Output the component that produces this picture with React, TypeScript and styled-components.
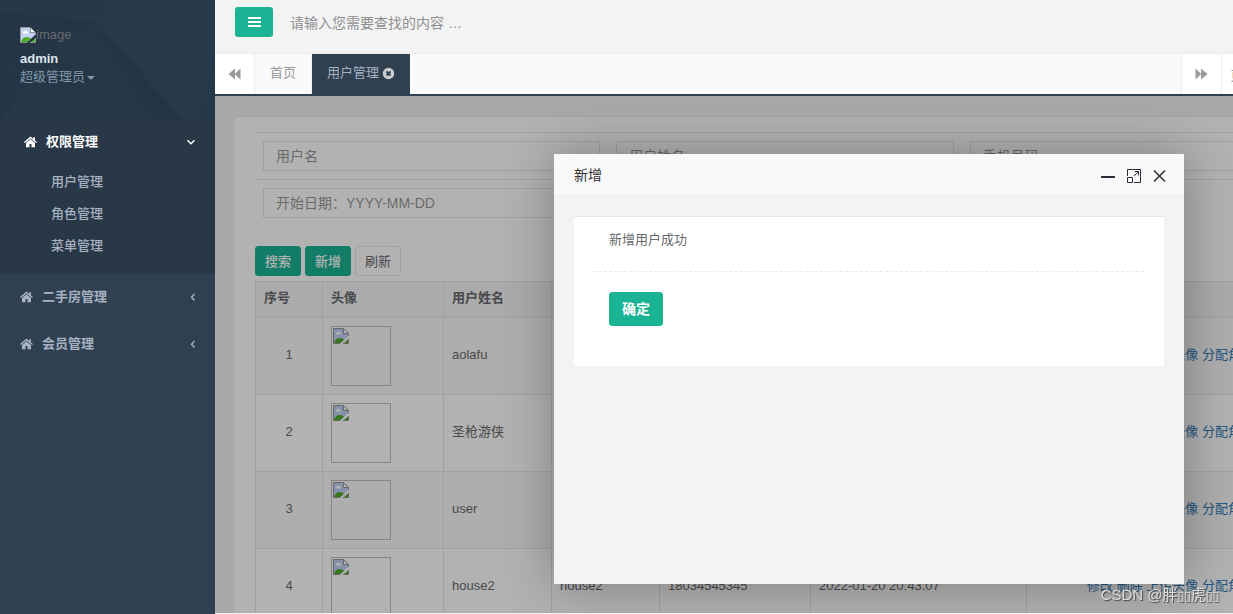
import React from 'react';
import styled, { createGlobalStyle } from 'styled-components';

const GlobalStyle = createGlobalStyle`
  *, *::before, *::after { box-sizing: border-box; }
  body {
    margin: 0;
    background: #2f4050;
    color: #676a6c;
    font: 13px/20px "Liberation Sans", "Noto Sans CJK SC", sans-serif;
  }
  button, input { font-family: inherit; }
  a { text-decoration: none; color: inherit; }
  ul { list-style: none; margin: 0; padding: 0; }
`;

const Shell = styled.div`
  display: flex;
  height: 100vh;
  overflow: hidden;
`;

const Sidebar = styled.nav`
  flex: 0 0 215px;
  background: #2f4050;
  color: #a7b1c2;
`;

const Profile = styled.div`
  position: relative;
  height: 120px;
  padding: 25px 20px;
  background: #263949;
`;

const Facets = styled.svg`
  position: absolute;
  inset: 0;
  width: 100%;
  height: 100%;
`;

const ProfileText = styled.div`
  position: relative;
  display: flex;
  flex-direction: column;
  line-height: 18px;
`;

const Avatar = styled.span`
  display: flex;
  align-items: center;
  height: 19px;
  color: #676a6c;
`;

const UserName = styled.strong`
  margin-top: 6px;
  color: #dfe4ed;
`;

const RoleLink = styled.a`
  display: flex;
  align-items: center;
  gap: 2px;
  color: #8095a8;
`;

const Caret = styled.span`
  margin-top: 2px;
  border: 4px solid transparent;
  border-top-color: currentColor;
  border-bottom: 0;
`;

const MenuSection = styled.li<{ $open?: boolean }>`
  background: ${p => (p.$open ? '#293846' : 'transparent')};
  color: ${p => (p.$open ? '#fff' : '#a7b1c2')};
  padding-left: ${p => (p.$open ? 4 : 0)}px;
  padding-bottom: ${p => (p.$open ? 12 : 0)}px;
`;

const MenuLink = styled.a`
  display: flex;
  align-items: center;
  height: 46px;
  padding: 0 17px 2px 20px;
  font-weight: 600;

  span { flex: 1; margin-left: 9px; }

  ${MenuSection} + ${MenuSection} & { height: 47px; }
`;

const OpenChevron = styled.i`
  display: flex;
  margin-right: 2px;
`;

const SubLink = styled.a`
  display: block;
  padding: 6px 0 6px 47px;
  color: #a7b1c2;
  font-weight: 500;
`;

const Main = styled.main`
  flex: 1 0 1140px;
  display: flex;
  flex-direction: column;
  background: #f3f3f4;
`;

const TopBar = styled.header`
  display: flex;
  align-items: flex-start;
  height: 54px;
  padding: 7px 20px;
  border-bottom: 1px solid #e7eaec;
`;

const MenuButton = styled.button`
  display: grid;
  place-items: center;
  width: 38px;
  height: 30px;
  padding: 0;
  border: 0;
  border-radius: 3px;
  background: #1ab394;
  color: #fff;
`;

const SearchInput = styled.input`
  width: 240px;
  height: 32px;
  margin-left: 16px;
  padding: 0 1px;
  border: 0;
  background: transparent;
  font-size: 14px;
  &::placeholder { color: #8f8f8f; }
`;

const TabBar = styled.div`
  display: flex;
  height: 42px;
  background: #fafafa;
  border-bottom: 2px solid #2f4050;
`;

const RollButton = styled.button<{ $width: number; $right?: boolean }>`
  display: flex;
  align-items: center;
  justify-content: center;
  width: ${p => p.$width}px;
  padding: 0;
  border: 0 solid #eee;
  border-width: ${p => (p.$right ? '0 0 0 1px' : '0 1px 0 0')};
  background: #fff;
  color: #999;
  font-size: 13px;
`;

const TabList = styled.div`
  display: flex;
  flex: 1;
`;

const Tab = styled.a<{ $active?: boolean }>`
  display: flex;
  align-items: center;
  gap: 3px;
  padding: 0 14px 2px 15px;
  border-right: 1px solid #eee;
  border-right-color: ${p => (p.$active ? '#2f4050' : '#eee')};
  background: ${p => (p.$active ? '#2f4050' : 'transparent')};
  color: ${p => (p.$active ? '#a7b1c2' : '#999')};

  &:first-child { padding-right: 15px; }
`;

const Frame = styled.section`
  position: relative;
  flex: 1;
  min-height: 0;
  overflow: hidden;
  padding: 20px;
  border-bottom: 1px solid #eee;
`;

const Card = styled.div`
  padding: 15px 20px 20px;
  border-top: 1px solid #e7eaec;
  background: #fff;
`;

const FilterRow = styled.div`
  display: grid;
  grid-template-columns: repeat(3, 1fr);
  border-top: 1px solid #e7eaec;
`;

const Field = styled.div`
  padding: 8px;
`;

const TextInput = styled.input`
  display: block;
  width: 100%;
  height: 30px;
  padding: 0 12px;
  border: 1px solid #e5e6e7;
  background: #fff;
  font-size: 14px;
  &::placeholder { color: #999; }
`;

const Actions = styled.div`
  display: flex;
  gap: 4px;
  margin: 20px 0 5px;
`;

const Button = styled.button<{ $primary?: boolean; $large?: boolean }>`
  height: ${p => (p.$large ? 34 : 30)}px;
  padding: 0 ${p => (p.$large ? 12 : 9)}px 2px;
  border: 1px solid ${p => (p.$primary ? '#1ab394' : '#e7eaec')};
  border-radius: 3px;
  background: ${p => (p.$primary ? '#1ab394' : '#fff')};
  color: ${p => (p.$primary ? '#fff' : '#676a6c')};
  font-size: ${p => (p.$large ? 14 : 13)}px;
  font-weight: ${p => (p.$large ? 600 : p.$primary ? 500 : 400)};
`;

const UserTable = styled.table`
  width: 100%;
  table-layout: fixed;
  border-collapse: collapse;
  th, td { border: 1px solid #e7e7e7; padding: 0 8px; text-align: left; }
  th { height: 36px; background: #f5f5f6; font-weight: 600; padding-bottom: 3px; }
  td { height: 77px; padding-bottom: 2px; }
  tbody tr:nth-child(odd) { background: #f9f9f9; }
  td:first-child, td:last-child { text-align: center; }
  td:nth-child(2) { padding-bottom: 0; }
`;

const Thumb = styled.div`
  width: 60px;
  height: 60px;
  padding: 1px;
  border: 1px solid #c0c0c0;
  svg { display: block; }
`;

const RowLink = styled.a`
  color: #337ab7;
`;

const Shade = styled.div`
  position: absolute;
  inset: 0;
  background: rgba(0, 0, 0, 0.3);
`;

const Dialog = styled.div`
  position: absolute;
  top: 58px;
  left: 339px;
  width: 630px;
  height: 430px;
  background: #f3f3f4;
  box-shadow: 1px 1px 50px rgba(0, 0, 0, 0.3);
`;

const DialogHeader = styled.header`
  display: flex;
  align-items: center;
  height: 42px;
  padding: 0 16px 0 20px;
  border-bottom: 1px solid #eee;
  background: #f8f8f8;
  color: #333;
`;

const DialogTitle = styled.h2`
  flex: 1;
  margin: 0;
  font-size: 14px;
  font-weight: 400;
`;

const DialogControls = styled.div`
  display: flex;
  gap: 10px;
  margin-top: 2px;
`;

const IconButton = styled.button`
  display: grid;
  place-items: center;
  width: 16px;
  height: 16px;
  padding: 0;
  border: 0;
  background: transparent;
  color: #2d2c3b;
`;

const DialogCard = styled.div`
  margin: 20px;
  padding: 13px 20px 40px;
  border-top: 1px solid #e7eaec;
  background: #fff;
`;

const Message = styled.p`
  margin: 0;
  padding: 0 15px 21px;
  border-bottom: 1px dashed #e7eaec;
`;

const DialogActions = styled.div`
  padding: 20px 15px 0;
`;

const Watermark = styled.div`
  position: fixed;
  right: 14px;
  bottom: 8px;
  color: #dcdcdc;
  font: 15px/20px "Liberation Sans", "Noto Sans CJK SC", "DejaVu Sans", sans-serif;
  text-shadow: 1px 1px 1px #444;

  small { font-size: 12px; }
`;

const HomeIcon = () => (
  <svg width="13" height="12" viewBox="0 0 13 12" fill="currentColor" aria-hidden="true">
    <path d="M6.5 3.200 2 7V11.200h3.500V8h2v3.200H11V7zM6.500.6 0 6.100l.9 1L6.500 2.500l5.600 4.600.9-1-2-1.700V1.200H9.200v1.700z" />
  </svg>
);

const Chevron = ({ down }: { down?: boolean }) => (
  <svg width="10" height="10" viewBox="0 0 10 10" fill="none" stroke="currentColor" strokeWidth="1.4" aria-hidden="true">
    <path d={down ? 'M1.500 3.200 5 6.700l3.500-3.500' : 'M6.500 2 3.500 5.200l3 3.200'} />
  </svg>
);

const BarsIcon = () => (
  <svg width="14" height="12" viewBox="0 0 14 12" fill="currentColor" aria-hidden="true">
    <path d="M1 1h13v2H1zM1 5h13v2H1zM1 9h13v2H1z" />
  </svg>
);

const Rewind = ({ forward }: { forward?: boolean }) => (
  <svg width="13" height="12" viewBox="0 0 13 12" fill="currentColor" aria-hidden="true">
    <path d={forward ? 'M.5.5 6 5.7V.5L12.5 6 6 11.5V6.3L.5 11.5z' : 'M12.5.5 7 5.7V.5L.5 6 7 11.5V6.3l5.5 5.2z'} />
  </svg>
);

const TabClose = () => (
  <svg width="13" height="13" viewBox="0 0 13 13" aria-hidden="true">
    <circle cx="6.5" cy="6.5" r="5.7" fill="#ccc" />
    <path d="m4.5 4.5 4 4m0-4-4 4" stroke="#2f4050" strokeWidth="1.8" />
  </svg>
);

const BrokenImage = () => (
  <svg width="16" height="16" viewBox="0 0 16 16" aria-hidden="true">
    <path d="M1 1h9v5h5v2L7.500 15H1z" fill="#c1d2f5" />
    <path d="M1 15c1-3.500 3-5 5.500-5 2 0 3.500.8 4.500 1.700L7.500 15z" fill="#50ab28" />
    <path d="M3 6.500c-.8-2 1-2 1.300-2 .6-1.500 2.500-1 2.700.2 1.500 0 1.500 1.800.5 1.800z" fill="#fff" />
    <path d="M11 1v4h4z" fill="#fff" />
    <path d="M7 15.500H.5V.5h10l5 5V8" fill="none" stroke="#949494" />
    <path d="M10.500 1v4.500H15" fill="none" stroke="#949494" />
    <path d="M11 15l4-3.500V15z" fill="#50ab28" />
    <path d="M10 15.500h5.500V11" fill="none" stroke="#949494" />
  </svg>
);

const MinIcon = () => (
  <svg width="16" height="16" aria-hidden="true"><path d="M1 8h14v2H1z" fill="currentColor" /></svg>
);

const MaxIcon = () => (
  <svg width="16" height="16" fill="none" stroke="currentColor" aria-hidden="true">
    <path d="M1.500 8V1.500h13v13H8M1.500 9.500h5v5h-5zM8 8l4.500-4.500M8.500 3.500h4v4" />
  </svg>
);

const CloseIcon = () => (
  <svg width="16" height="16" fill="none" stroke="currentColor" strokeWidth="1.500" aria-hidden="true">
    <path d="m2 2.500 11 11m0-11-11 11" />
  </svg>
);

const users = [
  { name: 'aolafu', login: 'aolafu', phone: '18034545342', created: '2022-01-20 20:40:12' },
  { name: '圣枪游侠', login: 'lucian', phone: '18034545343', created: '2022-01-20 20:41:25' },
  { name: 'user', login: 'user', phone: '18034545344', created: '2022-01-20 20:42:31' },
  { name: 'house2', login: 'house2', phone: '18034545345', created: '2022-01-20 20:43:07' },
];

const columnWidths = [67, 121, 108, 108, 151, 216];
const headings = ['序号', '头像', '用户姓名', '用户账号', '手机号', '创建时间', '操作'];
const rowActions = ['修改', '删除', '上传头像', '分配角色'];

const Navigation = () => (
  <Sidebar>
    <Profile>
      <Facets viewBox="0 0 215 120" preserveAspectRatio="none" aria-hidden="true">
        <path d="M0 12 95 21 0 120z" fill="#243646" />
        <path d="M95 21 183 120H20L5 60z" fill="#253747" />
        <path d="M95 21 110 0h105v50l-15 70h-17z" fill="#273a4a" />
        <path d="M95 21 150 0h65v40z" fill="#273a49" />
        <path d="m95 21 88 99h-25z" fill="#233545" />
      </Facets>
      <ProfileText>
        <Avatar role="img" aria-label="image"><BrokenImage />image</Avatar>
        <UserName>admin</UserName>
        <RoleLink href="#role">超级管理员<Caret /></RoleLink>
      </ProfileText>
    </Profile>
    <ul>
      <MenuSection $open>
        <MenuLink href="#auth"><HomeIcon /><span>权限管理</span><OpenChevron><Chevron down /></OpenChevron></MenuLink>
        <ul>
          {['用户管理', '角色管理', '菜单管理'].map(label => (
            <li key={label}><SubLink href="#page">{label}</SubLink></li>
          ))}
        </ul>
      </MenuSection>
      {['二手房管理', '会员管理'].map(label => (
        <MenuSection key={label}>
          <MenuLink href="#section"><HomeIcon /><span>{label}</span><Chevron /></MenuLink>
        </MenuSection>
      ))}
    </ul>
  </Sidebar>
);

const UserDialog = () => (
  <Dialog role="dialog" aria-labelledby="dialog-title">
    <DialogHeader>
      <DialogTitle id="dialog-title">新增</DialogTitle>
      <DialogControls>
        <IconButton aria-label="最小化"><MinIcon /></IconButton>
        <IconButton aria-label="最大化"><MaxIcon /></IconButton>
        <IconButton aria-label="关闭"><CloseIcon /></IconButton>
      </DialogControls>
    </DialogHeader>
    <DialogCard>
      <Message>新增用户成功</Message>
      <DialogActions><Button $primary $large>确定</Button></DialogActions>
    </DialogCard>
  </Dialog>
);

export default function App() {
  return (
    <>
      <GlobalStyle />
      <Shell>
        <Navigation />
        <Main>
          <TopBar>
            <MenuButton aria-label="菜单"><BarsIcon /></MenuButton>
            <SearchInput aria-label="搜索" placeholder="请输入您需要查找的内容 …" />
          </TopBar>
          <TabBar>
            <RollButton $width={40} aria-label="向左"><Rewind /></RollButton>
            <TabList>
              <Tab href="#home">首页</Tab>
              <Tab href="#users" $active>用户管理<TabClose /></Tab>
            </TabList>
            <RollButton $width={40} $right aria-label="向右"><Rewind forward /></RollButton>
            <RollButton $width={70} $right>页签操作</RollButton>
            <RollButton $width={64} $right>刷新</RollButton>
          </TabBar>
          <Frame>
            <Card>
              <FilterRow>
                {['用户名', '用户姓名', '手机号码'].map(label => (
                  <Field key={label}><TextInput aria-label={label} placeholder={label} /></Field>
                ))}
              </FilterRow>
              <FilterRow>
                {['开始日期', '结束日期'].map(label => (
                  <Field key={label}><TextInput aria-label={label} placeholder={`${label}：YYYY-MM-DD`} /></Field>
                ))}
              </FilterRow>
              <Actions>
                <Button $primary>搜索</Button>
                <Button $primary>新增</Button>
                <Button>刷新</Button>
              </Actions>
              <UserTable>
                <colgroup>
                  {columnWidths.map((width, i) => <col key={i} width={width} />)}
                  <col />
                </colgroup>
                <thead><tr>{headings.map(h => <th key={h}>{h}</th>)}</tr></thead>
                <tbody>
                  {users.map((user, i) => (
                    <tr key={user.login}>
                      <td>{i + 1}</td>
                      <td><Thumb><BrokenImage /></Thumb></td>
                      <td>{user.name}</td>
                      <td>{user.login}</td>
                      <td>{user.phone}</td>
                      <td>{user.created}</td>
                      <td>
                        {rowActions.map(action => (
                          <React.Fragment key={action}><RowLink href="#action">{action}</RowLink>{' '}</React.Fragment>
                        ))}
                      </td>
                    </tr>
                  ))}
                </tbody>
              </UserTable>
            </Card>
            <Shade />
            <UserDialog />
          </Frame>
        </Main>
      </Shell>
      <Watermark>CSDN @胖<small>▯▯</small>虎<small>▯▯</small></Watermark>
    </>
  );
}
